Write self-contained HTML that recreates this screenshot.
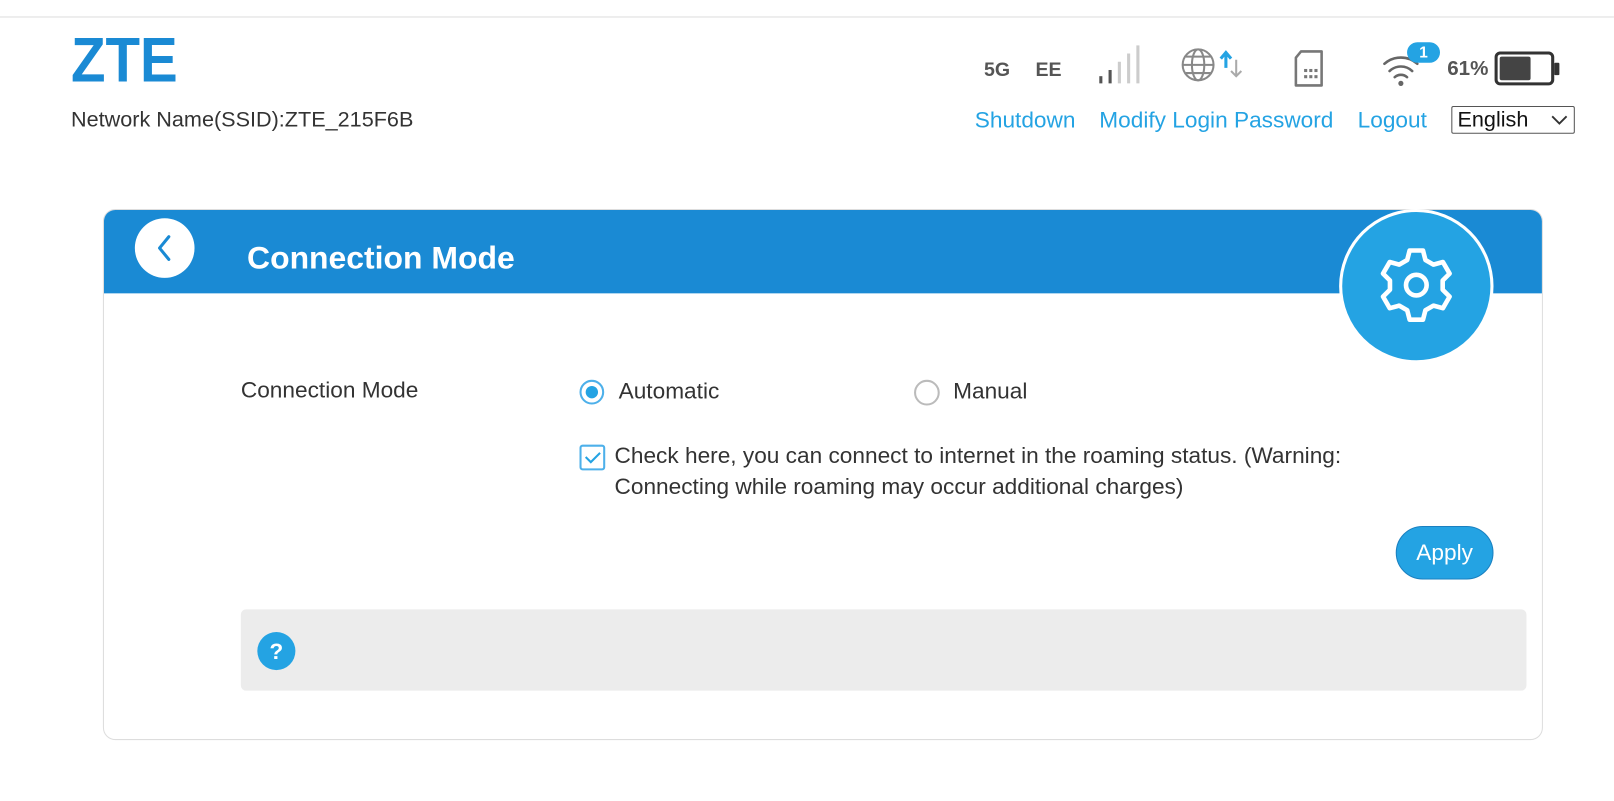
<!DOCTYPE html>
<html><head><meta charset="utf-8"><style>
*{box-sizing:border-box;margin:0;padding:0}
body{width:1614px;height:800px;background:#fff;font-family:"Liberation Sans",Arial,sans-serif;color:#333;position:relative;overflow:hidden}
#w{position:absolute;left:0;top:0;width:1568px;height:778px;transform:scale(1.0293);transform-origin:0 0}
.abs{position:absolute}
.topline{left:0;top:16px;width:1568px;height:1px;background:#ddd}
.logo{left:69px;top:28px;font-size:61px;font-weight:bold;color:#1a8ad4;line-height:61px;transform:scaleX(0.9);transform-origin:0 0}
.ssid{left:69px;top:105px;font-size:21px;color:#333}
.links a{position:absolute;top:104px;font-size:22px;color:#24a3e3;text-decoration:none}
.sel{left:1410px;top:103px;width:120px;height:27px;border:1px solid #555;border-radius:2px;font-size:21px;padding-left:5px;line-height:25px;color:#111}
.stat{font-size:19px;font-weight:bold;color:#555}
.card{left:100px;top:203px;width:1399px;height:516px;border:1px solid #ddd;border-radius:12px;overflow:hidden}
.hdr{left:0;top:0;width:1399px;height:81px;background:#1a8ad4}
.title{left:240px;top:233px;font-size:31px;font-weight:bold;color:#fff}
.lbl{font-size:22px;color:#333;line-height:25px}
</style></head><body><div id="w">
<div class="abs topline"></div>
<div class="abs logo">ZTE</div>
<div class="abs ssid">Network Name(SSID):ZTE_215F6B</div>

<div class="abs stat" style="left:956px;top:58px">5G</div>
<div class="abs stat" style="left:1006px;top:58px">EE</div>
<svg class="abs" style="left:1066px;top:44px" width="42" height="38">
<rect x="2" y="30" width="3" height="7" fill="#555"/><rect x="11" y="24" width="3" height="13" fill="#555"/>
<rect x="20" y="16" width="3" height="21" fill="#ccc"/><rect x="29" y="8" width="3" height="29" fill="#ccc"/><rect x="38" y="0" width="3" height="37" fill="#ccc"/></svg>
<svg class="abs" style="left:1145px;top:44px" width="70" height="40">
<g fill="none" stroke="#888" stroke-width="2"><circle cx="19" cy="19" r="15"/><ellipse cx="19" cy="19" rx="6" ry="15"/><path d="M4 19h30M7 11h24M7 27h24"/></g>
<path d="M46 22V8M41 13l5-6 5 6" stroke="#24a3e3" stroke-width="3" fill="none"/>
<path d="M56 14v16M51 25l5 5 5-5" stroke="#aaa" stroke-width="2" fill="none"/></svg>
<svg class="abs" style="left:1256px;top:48px" width="32" height="38">
<path d="M8 2h20v33H3V8z" fill="none" stroke="#777" stroke-width="2.5" stroke-linejoin="round"/>
<g fill="#777"><rect x="11" y="19" width="3" height="3"/><rect x="16" y="19" width="3" height="3"/><rect x="21" y="19" width="3" height="3"/><rect x="11" y="25" width="3" height="3"/><rect x="16" y="25" width="3" height="3"/><rect x="21" y="25" width="3" height="3"/></g></svg>
<svg class="abs" style="left:1340px;top:40px" width="62" height="46">
<g fill="none" stroke="#666" stroke-width="2.5" stroke-linecap="round"><path d="M5 22a24 24 0 0 1 32 0"/><path d="M10 29a16 16 0 0 1 22 0"/><path d="M15 35a9 9 0 0 1 12 0"/></g>
<circle cx="21" cy="41" r="2.5" fill="#666"/>
<rect x="27" y="1" width="32" height="20" rx="10" fill="#24a3e3"/><text x="43" y="16" font-size="15" font-weight="bold" fill="#fff" text-anchor="middle" font-family="Liberation Sans">1</text></svg>
<div class="abs stat" style="left:1406px;top:56px;font-size:20px">61%</div>
<svg class="abs" style="left:1452px;top:50px" width="64" height="34">
<rect x="1.5" y="1.5" width="55" height="30" rx="4" fill="#fff" stroke="#333" stroke-width="3"/>
<rect x="5" y="5" width="30" height="23" rx="2" fill="#444"/><rect x="58" y="11" width="5" height="12" rx="1" fill="#333"/></svg>

<div class="links"><a style="left:947px">Shutdown</a><a style="left:1068px">Modify Login Password</a><a style="left:1319px">Logout</a></div>
<div class="abs sel">English<svg style="position:absolute;right:6px;top:8px" width="16" height="10"><path d="M1 1l7 7 7-7" fill="none" stroke="#333" stroke-width="1.8"/></svg></div>

<div class="abs card"><div class="abs hdr"></div></div>
<div class="abs" style="left:131px;top:212px;width:58px;height:58px;border-radius:50%;background:#fff"></div>
<svg class="abs" style="left:131px;top:212px" width="58" height="58"><path d="M33 18l-9 11 9 11" fill="none" stroke="#1a8ad4" stroke-width="3" stroke-linecap="round" stroke-linejoin="round"/></svg>
<div class="abs title">Connection Mode</div>
<div class="abs" style="left:1301px;top:203px;width:150px;height:150px;border-radius:50%;background:#24a3e3;border:3px solid #fff"></div>
<svg class="abs" style="left:1336px;top:237px;overflow:visible" width="80" height="80" viewBox="0 0 80 80">
<g transform="translate(40 40) scale(1.18) translate(-40 -40)">
<path d="M32.5 19.3L34.5 11.5L45.5 11.5L47.5 19.3L54.1 23.1L61.9 21L67.4 30.5L61.7 36.2L61.7 43.8L67.4 49.5L61.9 59L54.1 56.9L47.5 60.7L45.5 68.5L34.5 68.5L32.5 60.7L25.9 56.9L18.1 59L12.6 49.5L18.3 43.8L18.3 36.2L12.6 30.5L18.1 21L25.9 23.1Z" fill="none" stroke="#fff" stroke-width="3.8" stroke-linejoin="round"/>
<circle cx="40" cy="40" r="8.5" fill="none" stroke="#fff" stroke-width="3.8"/></g></svg>

<div class="abs lbl" style="left:234px;top:366px">Connection Mode</div>
<div class="abs" style="left:563px;top:369px;width:24px;height:24px;border-radius:50%;border:2px solid #4db0ea;background:#fff"></div>
<div class="abs" style="left:569px;top:375px;width:12px;height:12px;border-radius:50%;background:#24a3e3"></div>
<div class="abs lbl" style="left:601px;top:367px">Automatic</div>
<div class="abs" style="left:888px;top:369px;width:25px;height:25px;border-radius:50%;border:2px solid #bbb"></div>
<div class="abs lbl" style="left:926px;top:367px">Manual</div>
<div class="abs" style="left:563px;top:432px;width:25px;height:25px;border:2px solid #4db0ea;border-radius:3px"></div>
<svg class="abs" style="left:563px;top:432px" width="25" height="25"><path d="M6 12l5 5 9-9" fill="none" stroke="#24a3e3" stroke-width="2"/></svg>
<div class="abs lbl" style="left:597px;top:428px;line-height:30px;width:740px">Check here, you can connect to internet in the roaming status. (Warning: Connecting while roaming may occur additional charges)</div>

<div class="abs" style="left:1356px;top:511px;width:95px;height:52px;border-radius:26px;background:#24a3e3;border:1px solid #1a80c0;color:#fff;font-size:22px;text-align:center;line-height:50px">Apply</div>
<div class="abs" style="left:234px;top:592px;width:1249px;height:79px;background:#ececec;border-radius:5px"></div>
<div class="abs" style="left:250px;top:614px;width:37px;height:37px;border-radius:50%;background:#24a3e3;color:#fff;font-weight:bold;font-size:22px;text-align:center;line-height:37px">?</div>
</div></body></html>
